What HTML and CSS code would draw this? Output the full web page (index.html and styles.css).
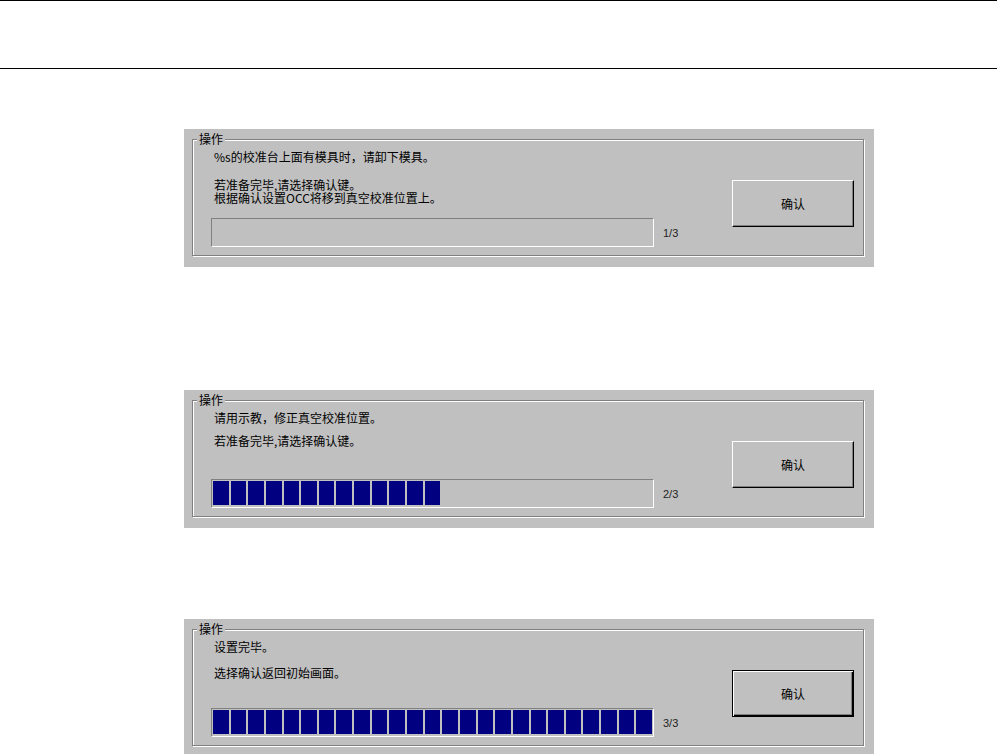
FILE: index.html
```html
<!DOCTYPE html>
<html lang="zh-CN">
<head>
  <meta charset="UTF-8">
  <title>真空校准位置设置</title>
  <link rel="stylesheet" href="styles.css">
</head>
<body>
  <div class="header"></div>

  <div class="shot shot-1">
    <div class="group">
      <span class="legend">操作</span>
      <div class="body">
        <div class="msg">
          <p>%s的校准台上面有模具时，请卸下模具。</p>
          <p class="wide">若准备完毕,请选择确认键。<br>根据确认设置OCC将移到真空校准位置上。</p>
        </div>
        <div class="meter">
          <div class="bar"></div>
          <span class="count">1/3</span>
        </div>
      </div>
      <button class="ok">确认</button>
    </div>
  </div>

  <div class="shot shot-2">
    <div class="group">
      <span class="legend">操作</span>
      <div class="body">
        <div class="msg">
          <p>请用示教，修正真空校准位置。</p>
          <p class="tight">若准备完毕,请选择确认键。</p>
        </div>
        <div class="meter">
          <div class="bar" data-fill="13"></div>
          <span class="count">2/3</span>
        </div>
      </div>
      <button class="ok">确认</button>
    </div>
  </div>

  <div class="shot shot-3">
    <div class="group">
      <span class="legend">操作</span>
      <div class="body">
        <div class="msg">
          <p>设置完毕。</p>
          <p>选择确认返回初始画面。</p>
        </div>
        <div class="meter">
          <div class="bar" data-fill="25"></div>
          <span class="count">3/3</span>
        </div>
      </div>
      <button class="ok default">确认</button>
    </div>
  </div>

  <script>
    // fill the progress bars with blocks
    document.querySelectorAll('.bar[data-fill]').forEach(function (bar) {
      var n = parseInt(bar.dataset.fill, 10);
      for (var i = 0; i < n; i++) {
        var b = document.createElement('i');
        bar.appendChild(b);
      }
    });
  </script>
</body>
</html>
```

FILE: styles.css
```css
html, body {
  margin: 0;
  background: #fff;
}
body {
  font-family: "Noto Sans CJK SC", "Liberation Sans", sans-serif;
  font-size: 12px;
  color: #000;
}
.header {
  height: 67px;
  border-top: 1px solid #000;
  border-bottom: 1px solid #000;
}
.shot {
  width: 690px;
  margin-left: 184px;
  background: #c0c0c0;
  padding: 10px 10px 11px 8px;
  box-sizing: border-box;
}
.shot-1 { margin-top: 60px; }
.shot-2 { margin-top: 123px; }
.shot-3 { margin-top: 91px; }

.group {
  position: relative;
  display: flex;
  align-items: flex-start;
  border: 1px solid #808080;
  box-shadow: inset 1px 1px 0 #fff, 1px 1px 0 #fff;
  padding: 10px 9px 8px 18px;
}
.legend {
  position: absolute;
  top: -7px;
  left: 4px;
  padding: 0 2px;
  line-height: 12px;
  background: #c0c0c0;
}
.body {
  display: flex;
  flex-direction: column;
}
.msg {
  height: 68px;
  padding-left: 3px;
}
.msg p {
  margin: 0;
  line-height: 13px;
}
.msg p + p { margin-top: 13px; }
.msg p.wide { margin-top: 15px; }
.msg p.tight { margin-top: 10px; }

.meter {
  display: flex;
  align-items: center;
  gap: 9px;
}
.bar {
  width: 443px;
  height: 29px;
  box-sizing: border-box;
  border: 1px solid;
  border-color: #808080 #fff #fff #808080;
  padding: 1px 1px 2px 1px;
  display: grid;
  grid-template-columns: repeat(25, 1fr);
  column-gap: 2px;
}
.bar i {
  background: #000080;
}
.count {
  font-family: "Liberation Sans", Arial, sans-serif;
  font-size: 11px;
  color: #222;
}
.ok {
  margin: 30px 0 0 auto;
  width: 122px;
  height: 47px;
  background: #c0c0c0;
  font-family: "Noto Sans CJK SC", sans-serif;
  font-size: 12px;
  color: #000;
  border: 1px solid;
  border-color: #fff #000 #000 #fff;
  box-shadow: inset -1px -1px 0 #808080;
  padding: 0;
}
.ok.default {
  border-color: #000;
  box-shadow: inset 1px 1px 0 #fff, inset -1px -1px 0 #000, inset -2px -2px 0 #808080;
}
```
